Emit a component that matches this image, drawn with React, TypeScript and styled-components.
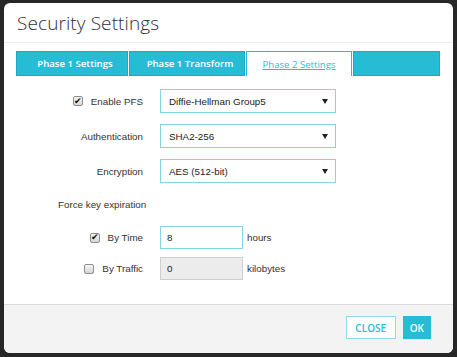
import React from 'react'
import styled, { createGlobalStyle } from 'styled-components'

const teal = '#27bcd6'

const GlobalStyle = createGlobalStyle`
    html, body {
        margin: 0;
        padding: 0;
        background: #272727;
    }
    * {
        box-sizing: border-box;
    }
`

const Backdrop = styled.div`
    width: 457px;
    height: 357px;
    padding: 3px 4px 4px 4px;
    background: #272727;
`

const Modal = styled.div`
    width: 449px;
    height: 350px;
    background: #fff;
    border-radius: 6px;
    display: flex;
    flex-direction: column;
    overflow: hidden;
`

const Header = styled.div`
    height: 40px;
    padding: 0 0 0 13px;
    display: flex;
    align-items: center;
    border-bottom: 1px solid #ececec;
`

const Title = styled.h1`
    margin: 0;
    font-family: "Open Sans", "Noto Sans", sans-serif;
    font-weight: 300;
    font-size: 19px;
    color: #2f2f3a;
    letter-spacing: 0.1px;
`

const Body = styled.div`
    flex: 1;
    padding: 8px 12px 0 12px;
`

const TabBar = styled.div`
    display: flex;
    width: 424px;
    height: 25px;
`

const Tab = styled.div<{ $active?: boolean; $w?: number }>`
    width: ${p => (p.$w ? `${p.$w}px` : 'auto')};
    flex: ${p => (p.$w ? '0 0 auto' : '1')};
    display: flex;
    align-items: center;
    justify-content: center;
    padding-left: ${p => (p.$active ? 0 : 6)}px;
    font-family: "Open Sans", "Noto Sans", sans-serif;
    font-size: 9.6px;
    font-weight: ${p => (p.$active ? 400 : 600)};
    color: ${p => (p.$active ? teal : '#fff')};
    text-decoration: ${p => (p.$active ? 'underline' : 'none')};
    background: ${p => (p.$active ? '#fff' : teal)};
    border: 1px solid ${p => (p.$active ? teal : '#1fa8c3')};
    border-bottom: ${p => (p.$active ? 'none' : '1px solid #1fa8c3')};
    & + & {
        margin-left: 1px;
    }
`

const Form = styled.div`
    display: grid;
    grid-template-columns: 127px auto;
    column-gap: 17px;
    row-gap: 11px;
    margin-top: 13px;
    align-items: center;
`

const Label = styled.div`
    display: flex;
    justify-content: flex-end;
    align-items: center;
    gap: 8px;
    font-family: "Liberation Sans", Arial, sans-serif;
    font-size: 9.8px;
    color: #333;
`

const SelectBox = styled.div`
    width: 176px;
    height: 24px;
    border: 1px solid #86d6e6;
    display: flex;
    align-items: center;
    justify-content: space-between;
    padding: 0 7px 0 8px;
    font-family: "Liberation Sans", Arial, sans-serif;
    font-size: 9.8px;
    color: #222;
`

const Caret = styled.span`
    width: 0;
    height: 0;
    border-left: 3px solid transparent;
    border-right: 3px solid transparent;
    border-top: 5px solid #222;
`

const Section = styled.div`
    margin: 16px 0 0 42px;
    font-family: "Liberation Sans", Arial, sans-serif;
    font-size: 9.8px;
    color: #333;
`

const ExpiryGrid = styled.div`
    display: grid;
    grid-template-columns: 127px auto;
    column-gap: 17px;
    row-gap: 8px;
    margin-top: 16px;
    align-items: center;
`

const InputRow = styled.div`
    display: flex;
    align-items: center;
    gap: 4px;
    font-family: "Liberation Sans", Arial, sans-serif;
    font-size: 9.8px;
    color: #333;
`

const TextInput = styled.div<{ $disabled?: boolean }>`
    width: 83px;
    height: 23px;
    border: 1px solid ${p => (p.$disabled ? '#cfcfcf' : '#86d6e6')};
    background: ${p => (p.$disabled ? '#ececec' : '#fff')};
    display: flex;
    align-items: center;
    padding-left: 6px;
    color: #222;
`

const Check = styled.span`
    width: 10px;
    height: 10px;
    border: 1px solid #8e8e8e;
    border-radius: 2px;
    background: linear-gradient(#f6f6f6, #d6d6d6);
    display: inline-flex;
    align-items: center;
    justify-content: center;
    font-size: 9px;
    line-height: 1;
    color: #111;
`

const Footer = styled.div`
    height: 49px;
    background: #f3f3f3;
    border-top: 1px solid #dcdcdc;
    display: flex;
    justify-content: flex-end;
    align-items: flex-start;
    gap: 7px;
    padding: 11px 22px 0 0;
`

const Button = styled.button<{ $primary?: boolean }>`
    height: 23px;
    padding: 0 ${p => (p.$primary ? 6 : 8)}px;
    min-width: ${p => (p.$primary ? 25 : 50)}px;
    font-family: "Open Sans", "Noto Sans", sans-serif;
    font-size: 10px;
    font-weight: 600;
    color: ${p => (p.$primary ? '#fff' : teal)};
    background: ${p => (p.$primary ? teal : '#fff')};
    border: 1px solid ${p => (p.$primary ? teal : '#8fdbe9')};
    border-radius: 0;
    cursor: pointer;
`

const selects = [
    { label: 'Enable PFS', value: 'Diffie-Hellman Group5', check: true },
    { label: 'Authentication', value: 'SHA2-256' },
    { label: 'Encryption', value: 'AES (512-bit)' },
]

export default function App() {
    return (
        <>
            <GlobalStyle />
            <Backdrop>
                <Modal>
                    <Header>
                        <Title>Security Settings</Title>
                    </Header>
                    <Body>
                        <TabBar>
                            <Tab $w={112}>Phase 1 Settings</Tab>
                            <Tab $w={116}>Phase 1 Transform</Tab>
                            <Tab $w={106} $active>Phase 2 Settings</Tab>
                            <Tab />
                        </TabBar>
                        <Form>
                            {selects.map(s => (
                                <React.Fragment key={s.label}>
                                    <Label>
                                        {s.check && <Check>✔</Check>}
                                        {s.label}
                                    </Label>
                                    <SelectBox>
                                        {s.value}
                                        <Caret />
                                    </SelectBox>
                                </React.Fragment>
                            ))}
                        </Form>
                        <Section>Force key expiration</Section>
                        <ExpiryGrid>
                            <Label>
                                <Check>✔</Check>
                                By Time
                            </Label>
                            <InputRow>
                                <TextInput>8</TextInput>
                                hours
                            </InputRow>
                            <Label>
                                <Check />
                                By Traffic
                            </Label>
                            <InputRow>
                                <TextInput $disabled>0</TextInput>
                                kilobytes
                            </InputRow>
                        </ExpiryGrid>
                    </Body>
                    <Footer>
                        <Button>CLOSE</Button>
                        <Button $primary>OK</Button>
                    </Footer>
                </Modal>
            </Backdrop>
        </>
    )
}
